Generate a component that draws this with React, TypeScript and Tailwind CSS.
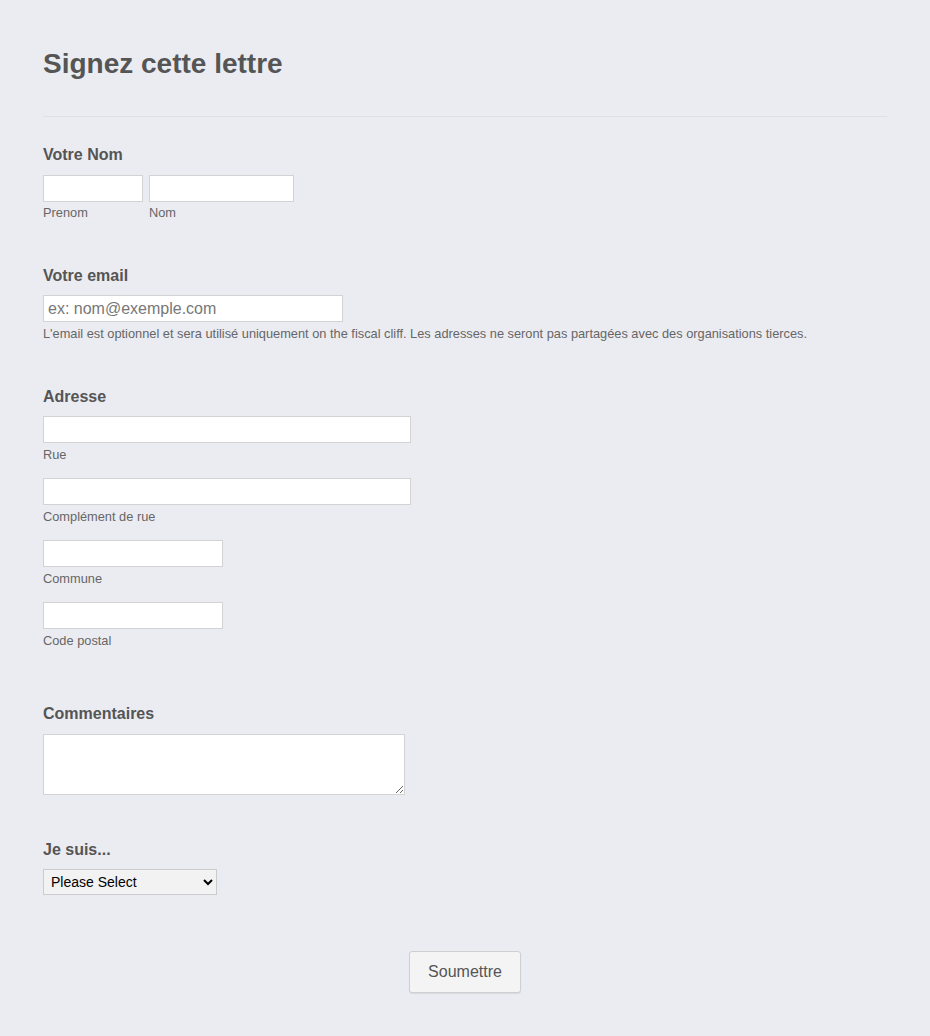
import React from "react";

const inputCls =
  "block h-[27px] border border-[#d3d3d3] bg-white outline-none px-1 text-[16px] text-[#555]";

function Sub({ children, mt = "mt-[3px]" }: { children: React.ReactNode; mt?: string }) {
  return <div className={`text-[12.8px] leading-[15px] text-[#666] ${mt}`}>{children}</div>;
}

function Label({ children }: { children: React.ReactNode }) {
  return <div className="text-[16px] leading-[19px] font-bold text-[#555]">{children}</div>;
}

export default function App() {
  return (
    <div
      className="min-h-[1036px] bg-[#ebecf2] px-[43px] pt-[47px]"
      style={{ fontFamily: '"Liberation Sans", Arial, sans-serif' }}
    >
      <h1 className="text-[28px] leading-[34px] font-bold text-[#555]">Signez cette lettre</h1>
      <div className="mt-[35px] border-t border-[#e0e1e7]" />

      <div className="mt-[28px]">
        <Label>Votre Nom</Label>
        <div className="flex gap-[6px] mt-[11px]">
          <div>
            <input className={`${inputCls} w-[100px]`} />
            <Sub>Prenom</Sub>
          </div>
          <div>
            <input className={`${inputCls} w-[145px]`} />
            <Sub>Nom</Sub>
          </div>
        </div>
      </div>

      <div className="mt-[46px]">
        <Label>Votre email</Label>
        <input
          className={`${inputCls} w-[300px] mt-[10px] placeholder:text-[#777]`}
          placeholder="ex: nom@exemple.com"
        />
        <Sub mt="mt-[4px]">
          L'email est optionnel et sera utilisé uniquement on the fiscal cliff. Les adresses ne seront pas partagées avec des organisations tierces.
        </Sub>
      </div>

      <div className="mt-[46px]">
        <Label>Adresse</Label>
        <input className={`${inputCls} w-[368px] mt-[10px]`} />
        <Sub mt="mt-[4px]">Rue</Sub>
        <input className={`${inputCls} w-[368px] mt-[16px]`} />
        <Sub mt="mt-[4px]">Complément de rue</Sub>
        <input className={`${inputCls} w-[180px] mt-[16px]`} />
        <Sub mt="mt-[4px]">Commune</Sub>
        <input className={`${inputCls} w-[180px] mt-[16px]`} />
        <Sub mt="mt-[4px]">Code postal</Sub>
      </div>

      <div className="mt-[56px]">
        <Label>Commentaires</Label>
        <textarea className="block mt-[11px] w-[362px] h-[61px] border border-[#d3d3d3] bg-white outline-none" />
      </div>

      <div className="mt-[45px]">
        <Label>Je suis...</Label>
        <select
          className="block mt-[10px] w-[174px] h-[26px] border border-[#ccc] bg-[#f2f2f2] text-[14px] text-black pl-[3px]"
          style={{ appearance: "auto" }}
        >
          <option>Please Select</option>
        </select>
      </div>

      <div className="flex justify-center mt-[56px] pb-[44px]">
        <button className="w-[112px] h-[42px] rounded-[3px] border border-[#cfcfcf] bg-[#f4f4f4] text-[16px] text-[#555] shadow-[0_1px_1px_rgba(0,0,0,0.08)]">
          Soumettre
        </button>
      </div>
    </div>
  );
}
